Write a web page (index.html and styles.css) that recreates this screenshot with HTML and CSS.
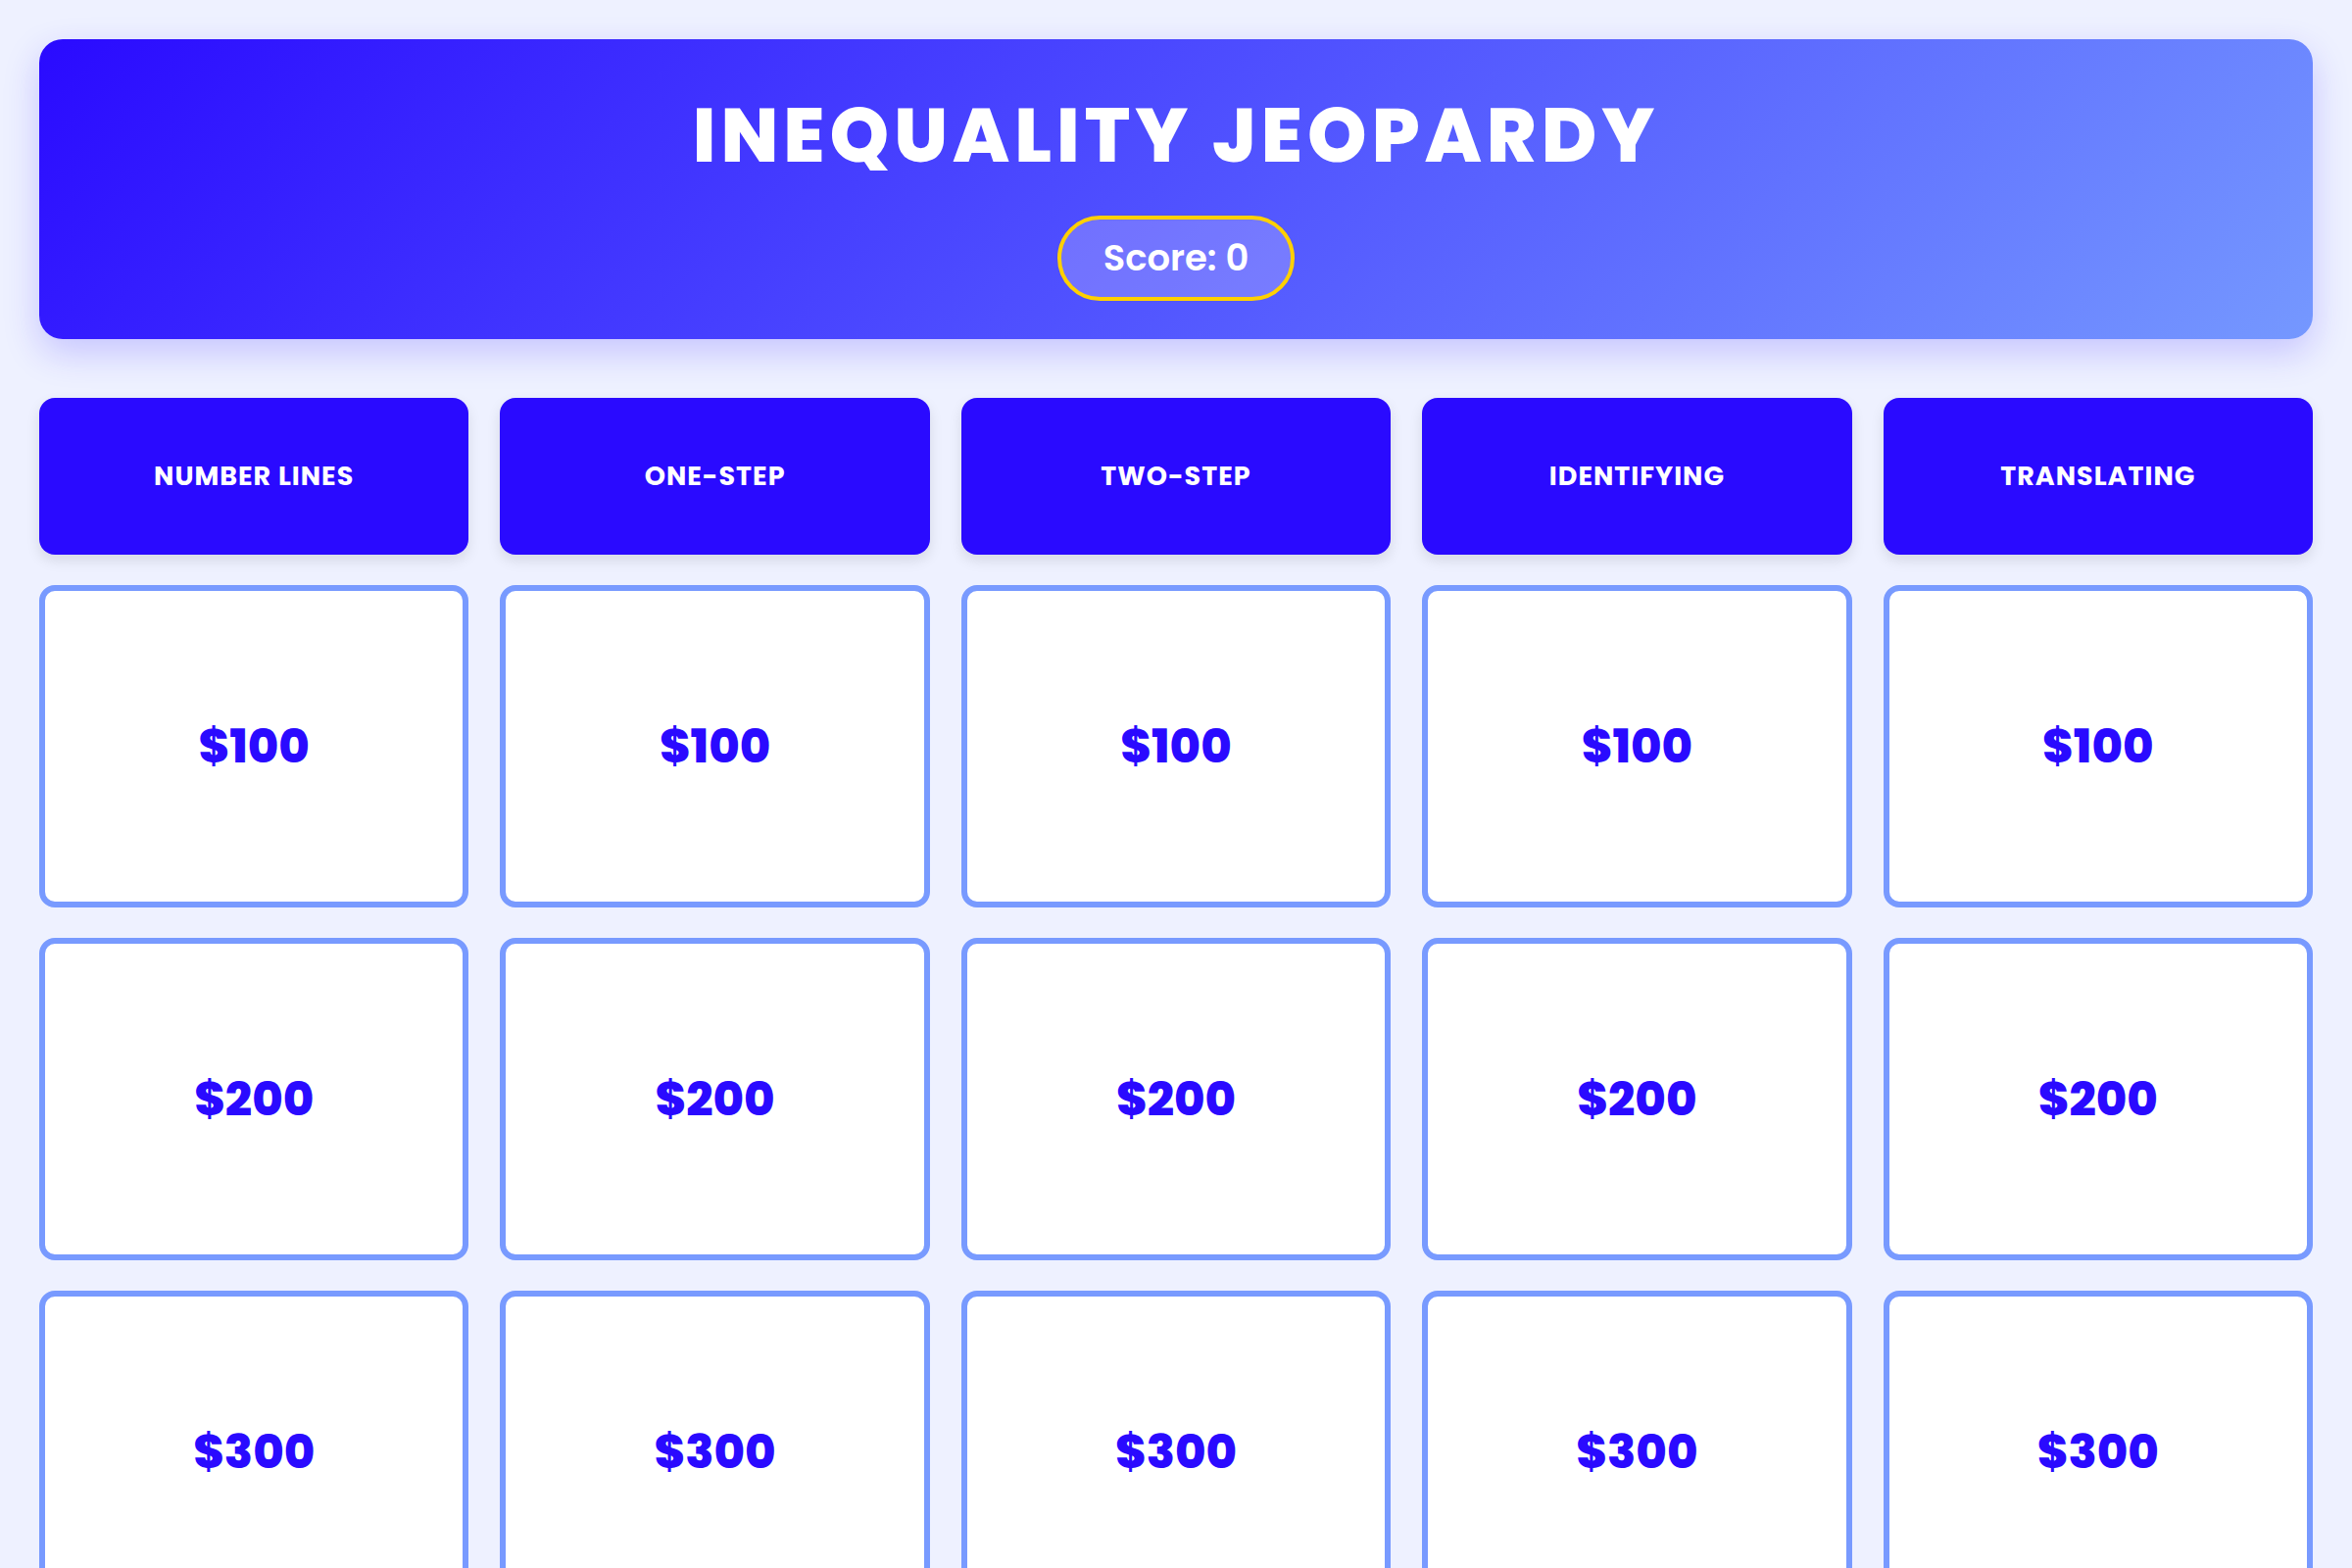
FILE: index.html
```html
<!DOCTYPE html>
<html lang="en">
<head>
    <meta charset="UTF-8">
    <meta name="viewport" content="width=device-width, initial-scale=1.0">
    <title>Inequality Jeopardy</title>
    <link rel="stylesheet" href="styles.css">
</head>
<body>
    <header class="game-header">
        <h1>Inequality Jeopardy</h1>
        <div class="score">Score: <span id="score">0</span></div>
    </header>

    <!-- board: category row, then one row per point value -->
    <div class="board">
        <div class="category">Number Lines</div>
        <div class="category">One-Step</div>
        <div class="category">Two-Step</div>
        <div class="category">Identifying</div>
        <div class="category">Translating</div>

        <button class="tile">$100</button>
        <button class="tile">$100</button>
        <button class="tile">$100</button>
        <button class="tile">$100</button>
        <button class="tile">$100</button>

        <button class="tile">$200</button>
        <button class="tile">$200</button>
        <button class="tile">$200</button>
        <button class="tile">$200</button>
        <button class="tile">$200</button>

        <button class="tile">$300</button>
        <button class="tile">$300</button>
        <button class="tile">$300</button>
        <button class="tile">$300</button>
        <button class="tile">$300</button>

        <button class="tile">$400</button>
        <button class="tile">$400</button>
        <button class="tile">$400</button>
        <button class="tile">$400</button>
        <button class="tile">$400</button>

        <button class="tile">$500</button>
        <button class="tile">$500</button>
        <button class="tile">$500</button>
        <button class="tile">$500</button>
        <button class="tile">$500</button>
    </div>
</body>
</html>
```

FILE: styles.css
```css
body {
    font-family: "Poppins", "Inter", sans-serif;
    background-color: #eef1ff;
    margin: 0;
    padding: 40px;
}

.game-header {
    background: linear-gradient(135deg, #2a0aff 0%, #7598ff 100%);
    border-radius: 24px;
    padding: 52px 20px 39px;
    text-align: center;
    color: white;
    box-shadow: 0 14px 36px rgba(60, 40, 255, 0.22);
    margin-bottom: 60px;
}

.game-header h1 {
    margin: 0 0 36px;
    font-size: 77px;
    line-height: 1.2;
    font-weight: 800;
    letter-spacing: 5px;
    text-transform: uppercase;
}

.score {
    display: inline-block;
    padding: 12px 43px;
    border: 4px solid #ffd000;
    border-radius: 50px;
    background-color: rgba(255, 255, 255, 0.2);
    font-size: 37px;
    line-height: 55px;
    font-weight: 600;
}

.board {
    display: grid;
    grid-template-columns: repeat(5, 1fr);
    gap: 31px 32px;
}

.category {
    height: 160px;
    display: flex;
    justify-content: center;
    align-items: center;
    background-color: #2a0aff;
    color: white;
    border-radius: 16px;
    font-size: 27px;
    font-weight: 700;
    letter-spacing: 1px;
    text-transform: uppercase;
    box-shadow: 0 6px 14px rgba(0, 0, 0, 0.1);
}

.tile {
    height: 329px;
    box-sizing: border-box;
    display: flex;
    justify-content: center;
    align-items: center;
    background-color: white;
    border: 6px solid #789aff;
    border-radius: 16px;
    color: #2a0aff;
    font-family: inherit;
    font-size: 48px;
    font-weight: 800;
    cursor: pointer;
    transition: transform 0.2s ease;
}

.tile:hover {
    transform: scale(1.03);
}
```
